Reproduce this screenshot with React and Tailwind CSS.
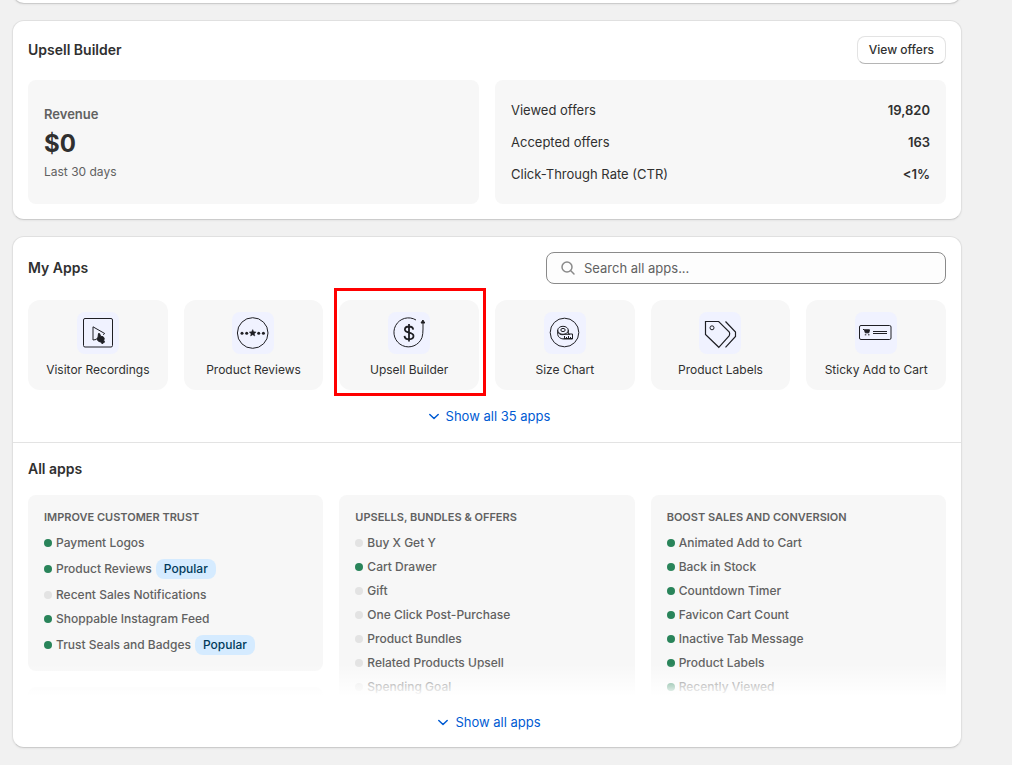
import clsx from 'clsx';

const stats = [
  { label: 'Viewed offers', value: '19,820' },
  { label: 'Accepted offers', value: '163' },
  { label: 'Click-Through Rate (CTR)', value: '<1%' },
];

const myApps = [
  { name: 'Visitor Recordings', icon: RecordingsIcon },
  { name: 'Product Reviews', icon: ReviewsIcon },
  { name: 'Upsell Builder', icon: UpsellIcon, highlighted: true },
  { name: 'Size Chart', icon: SizeChartIcon },
  { name: 'Product Labels', icon: LabelsIcon },
  { name: 'Sticky Add to Cart', icon: StickyCartIcon },
];

const categories = [
  {
    title: 'Improve customer trust',
    apps: [
      { name: 'Payment Logos', active: true },
      { name: 'Product Reviews', active: true, popular: true },
      { name: 'Recent Sales Notifications' },
      { name: 'Shoppable Instagram Feed', active: true },
      { name: 'Trust Seals and Badges', active: true, popular: true },
    ],
  },
  {
    title: 'Upsells, bundles & offers',
    apps: [
      { name: 'Buy X Get Y' },
      { name: 'Cart Drawer', active: true },
      { name: 'Gift' },
      { name: 'One Click Post-Purchase' },
      { name: 'Product Bundles' },
      { name: 'Related Products Upsell' },
      { name: 'Spending Goal' },
    ],
  },
  {
    title: 'Boost sales and conversion',
    apps: [
      { name: 'Animated Add to Cart', active: true },
      { name: 'Back in Stock', active: true },
      { name: 'Countdown Timer', active: true },
      { name: 'Favicon Cart Count', active: true },
      { name: 'Inactive Tab Message', active: true },
      { name: 'Product Labels', active: true },
      { name: 'Recently Viewed', active: true },
    ],
  },
];

function IconFrame({ children }) {
  return (
    <svg viewBox="0 0 42 42" className="size-[42px] rounded-lg bg-[#f0f2ff]" fill="none" stroke="#1f1f24" aria-hidden="true">
      {children}
    </svg>
  );
}

function RecordingsIcon() {
  return (
    <IconFrame>
      <rect x="6.5" y="6.5" width="29" height="28.5" rx="1.5" />
      <path d="M19 27.500l-3 .5V14.800l11.700 6.700-1.500 1.200" />
      <path
        d="M21.500 21.500l1.200.2.800 2.500 2.700.6 1 1.500-.5 2.700 1 1-2.700 1.700-1-1.700-2.300-.6-2.200-2.600 1.500-1.300z"
        fill="#1f1f24"
      />
    </IconFrame>
  );
}

function ReviewsIcon() {
  return (
    <IconFrame>
      <circle cx="20.700" cy="21" r="15.300" />
      <path
        d="M20.700 17.600l1 2.200 2.400.3-1.800 1.600.5 2.300-2.100-1.200-2.100 1.200.5-2.300-1.800-1.600 2.400-.3z"
        fill="#1f1f24"
        strokeWidth=".5"
      />
      <g fill="#1f1f24" stroke="none">
        <circle cx="10" cy="21.300" r="1.500" />
        <circle cx="14.700" cy="21.300" r="1.500" />
        <circle cx="26.700" cy="21.300" r="1.500" />
        <circle cx="31.400" cy="21.300" r="1.500" />
      </g>
    </IconFrame>
  );
}

function UpsellIcon() {
  return (
    <IconFrame>
      <path d="M28 8A14.500 14.500 0 1 0 34 25.500Q35 22 35 17V10" />
      <path d="M34.900 8l1.900 3h-3.800z" fill="#1f1f24" />
      <path
        d="M25.200 17.600c-.2-2.100-1.800-3.100-4.200-3.100s-4.100 1.200-4.100 3c0 4.400 8.600 2 8.600 6.600 0 1.900-1.700 3.200-4.400 3.200s-4.500-1.200-4.600-3.400M21 12v17.500"
        strokeWidth="1.800"
      />
    </IconFrame>
  );
}

function SizeChartIcon() {
  return (
    <IconFrame>
      <circle cx="20.500" cy="20.500" r="14.300" />
      <ellipse cx="19" cy="18.300" rx="5.300" ry="4" />
      <ellipse cx="19" cy="18" rx="2.200" ry="1.600" />
      <path d="M13.700 18v4.500c.3 2.500 2.600 4.200 5.600 4.500h9.200v-5h-4.200V18M14 20.500c1.500 2.500 4.500 2.500 7 1.800h5" />
      <path d="M19.500 26.500h9M20.500 27v-3M22.500 27v-2M24.500 27v-3M26.500 27v-2" />
    </IconFrame>
  );
}

function LabelsIcon() {
  return (
    <IconFrame>
      <path d="M6.500 9.500h13.200l10.600 10.600c.5 1.100.5 2.400 0 3.500L19.800 35.300 6.500 22.500z" strokeWidth="1.200" />
      <circle cx="13" cy="15.800" r="2" />
      <path d="M26.500 9.500l10 10.500v4.500L26.500 35.300" strokeWidth="1.200" />
    </IconFrame>
  );
}

function StickyCartIcon() {
  return (
    <IconFrame>
      <rect x="4.500" y="13.500" width="31.500" height="14" rx="1.500" />
      <path d="M18 19.500h14M18 21.500h14" />
      <path d="M8 17.500h1.500" />
      <path d="M9.500 17.800h5l-.7 3h-3.500z" fill="#1f1f24" />
      <path d="M9.800 22.800h1.500M13 22.800h1.500" />
    </IconFrame>
  );
}

function ChevronIcon() {
  return (
    <svg viewBox="0 0 20 20" className="size-5" fill="none" stroke="currentColor" strokeWidth="1.500" strokeLinecap="round" strokeLinejoin="round" aria-hidden="true">
      <path d="M5.800 8.500L10 12.500l4.200-4" />
    </svg>
  );
}

function Card({ children, className }) {
  return (
    <section className={clsx('rounded-xl border border-[#e0e0e0] border-b-[#cccccc] bg-white shadow-xs', className)}>
      {children}
    </section>
  );
}

function ShowAllButton({ children }) {
  return (
    <button type="button" className="flex h-5 items-center gap-0.5 text-[#005bd3]">
      <ChevronIcon />
      {children}
    </button>
  );
}

function AppTile({ app }) {
  const Icon = app.icon;
  return (
    <button type="button" className="relative flex flex-col items-center gap-1.5 rounded-xl bg-[#f7f7f7] pt-3 pb-2.5">
      <Icon />
      <span className="text-xs leading-5">{app.name}</span>
      {app.highlighted && (
        <span className="pointer-events-none absolute -top-3 -right-[7px] -bottom-1.5 -left-[5px] border-3 border-[#ff0000]" />
      )}
    </button>
  );
}

function Category({ category }) {
  return (
    <div className="rounded-lg bg-[#f7f7f7] px-4 py-3.5 text-[#616161]">
      <h3 className="text-[11px] leading-4 font-semibold uppercase">{category.title}</h3>
      <ul className="mt-2 flex flex-col gap-1 text-xs leading-5 font-[550]">
        {category.apps.map((app) => (
          <li key={app.name} className={clsx('flex items-center gap-1', app.popular && 'py-0.5')}>
            <span className={clsx('size-2 rounded-full', app.active ? 'bg-[#29845a]' : 'bg-[#e3e3e3]')} />
            <a href="#">{app.name}</a>
            {app.popular && <span className="rounded-lg bg-[#d5ebff] px-2 text-[#003a5a]">Popular</span>}
          </li>
        ))}
      </ul>
    </div>
  );
}

export default function App() {
  return (
    <div className="min-h-screen bg-[#f1f1f1] pr-[50px] pb-4 pl-3 font-[Inter,sans-serif] text-[13px] leading-5 text-[#303030]">
      <div className="flex flex-col gap-4">
        <Card className="-mt-12 h-13" />

        <Card className="p-[15px]">
          <div className="flex items-center justify-between">
            <h2 className="text-sm font-semibold">Upsell Builder</h2>
            <button
              type="button"
              className="h-7 rounded-lg border border-[#e3e3e3] border-b-[#b5b5b5] bg-white px-[11px] text-xs font-[550]"
            >
              View offers
            </button>
          </div>
          <div className="mt-4 grid grid-cols-2 gap-4">
            <div className="flex flex-col justify-center rounded-lg bg-[#f7f7f7] px-4 text-[#616161]">
              <h3 className="font-semibold">Revenue</h3>
              <p className="my-1 text-2xl leading-8 font-bold text-[#303030]">$0</p>
              <p className="text-xs">Last 30 days</p>
            </div>
            <dl className="flex flex-col gap-3 rounded-lg bg-[#f7f7f7] px-4 py-5">
              {stats.map((stat) => (
                <div key={stat.label} className="flex justify-between">
                  <dt>{stat.label}</dt>
                  <dd className="font-semibold">{stat.value}</dd>
                </div>
              ))}
            </dl>
          </div>
        </Card>

        <Card>
          <div className="px-[15px] pt-[15px] pb-4">
            <div className="flex items-center justify-between">
              <h2 className="text-sm font-semibold">My Apps</h2>
              <label className="flex h-8 w-[400px] items-center gap-1.5 rounded-lg border border-[#8a8a8a] bg-[#fdfdfd] px-[11px]">
                <svg viewBox="0 0 20 20" className="size-5 shrink-0" fill="none" stroke="#8a8a8a" strokeWidth="1.500" strokeLinecap="round" aria-hidden="true">
                  <circle cx="9" cy="9" r="5" />
                  <path d="M12.800 12.800l3.200 3.200" />
                </svg>
                <input
                  type="search"
                  aria-label="Search all apps"
                  placeholder="Search all apps..."
                  className="min-w-0 flex-1 bg-transparent outline-none placeholder:text-[#616161]"
                />
              </label>
            </div>
            <div className="mt-4 grid grid-cols-6 gap-4">
              {myApps.map((app) => (
                <AppTile key={app.name} app={app} />
              ))}
            </div>
            <div className="mt-4 flex justify-center">
              <ShowAllButton>Show all 35 apps</ShowAllButton>
            </div>
          </div>

          <div className="border-t border-[#e3e3e3] px-[15px] pt-4 pb-[15px]">
            <h2 className="text-sm font-semibold">All apps</h2>
            <div className="relative mt-4 h-[201px] overflow-hidden">
              <div className="grid grid-cols-3 gap-4">
                {categories.map((category) => (
                  <div key={category.title} className="flex flex-col gap-4">
                    <Category category={category} />
                    <div className="h-10 rounded-lg bg-[#f7f7f7]" />
                  </div>
                ))}
              </div>
              <div className="pointer-events-none absolute inset-x-0 bottom-0 h-8 bg-linear-to-b from-transparent to-white" />
            </div>
            <div className="mt-4 flex justify-center">
              <ShowAllButton>Show all apps</ShowAllButton>
            </div>
          </div>
        </Card>
      </div>
    </div>
  );
}
